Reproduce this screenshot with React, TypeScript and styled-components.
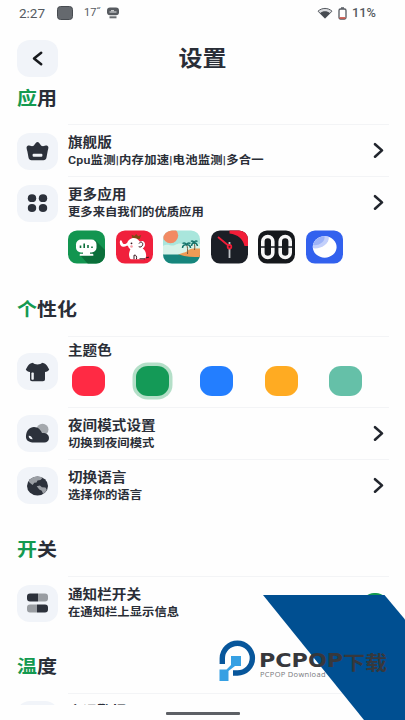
import React from 'react';
import styled, { createGlobalStyle } from 'styled-components';

const Global = createGlobalStyle`
  body { margin: 0; background: #fefefe; overflow: hidden; }
  * { box-sizing: border-box; }
`;

const Screen = styled.div`
  position: relative;
  width: 405px;
  height: 720px;
  overflow: hidden;
  display: flex;
  flex-direction: column;
  background: #fefefe;
  color: #2a2e37;
  font-family: Roboto, 'Noto Sans CJK SC', sans-serif;
`;

const StatusBar = styled.header`
  height: 26px;
  flex: none;
  display: flex;
  align-items: center;
  justify-content: space-between;
  padding: 0 28px 0 19px;
  color: #555a60;
`;

const StatusGroup = styled.div<{ $gap: number }>`
  display: flex;
  align-items: center;
  gap: ${p => p.$gap}px;
`;

const StatusText = styled.span<{ $size: number; $width: number; $weight?: number }>`
  font: ${p => p.$weight ?? 500} ${p => p.$size}px/14px Roboto, sans-serif;
  width: ${p => p.$width}px;
  white-space: nowrap;
`;

const TitleBar = styled.div`
  height: 58px;
  flex: none;
  display: grid;
  grid-template-columns: 41px 1fr 41px;
  align-items: center;
  padding: 7px 17px 0;
`;

const Tile = styled.div`
  width: 41px;
  height: 37px;
  border-radius: 13px / 12px;
  background: #f1f4f9;
  display: flex;
  align-items: center;
  justify-content: center;
`;

const PageTitle = styled.h1`
  margin: 0;
  text-align: center;
  font-size: 24px;
  font-weight: 700;
  line-height: 30px;
  transform: scaleY(0.92);
`;

const Content = styled.main`
  height: 621px;
  flex: none;
  overflow: hidden;
`;

const Section = styled.section<{ $height: number }>`
  height: ${p => p.$height}px;
`;

const Heading = styled.h2<{ $height: number }>`
  margin: 0;
  height: ${p => p.$height}px;
  padding: 1px 0 0 17px;
  font-size: 20px;
  font-weight: 700;
  line-height: 28px;
  span {
    display: inline-block;
    transform: scaleY(0.92);
  }
  em {
    font-style: normal;
    color: #149a50;
  }
`;

const RowBox = styled.div<{ $height: number }>`
  display: grid;
  grid-template-columns: 41px 1fr;
  column-gap: 10px;
  padding: 0 16px 0 17px;
  height: ${p => p.$height}px;
`;

const IconCell = styled.div<{ $top: number }>`
  padding-top: ${p => p.$top}px;
`;

const Body = styled.div`
  border-top: 1px solid #f3f4f6;
`;

const Line = styled.div`
  display: flex;
  justify-content: space-between;
  height: 51px;
  padding: 8px 4px 0 0;
`;

const Title = styled.div`
  font-size: 14.6px;
  font-weight: 700;
  line-height: 19px;
  white-space: nowrap;
  transform: scaleY(0.9);
`;

const Sub = styled.div<{ $spacing?: number }>`
  font-size: 12.35px;
  font-weight: 600;
  line-height: 17px;
  letter-spacing: ${p => p.$spacing ?? 0}px;
  white-space: nowrap;
  transform: scaleY(0.92);
`;

const Chevron = styled.svg`
  margin-top: 9px;
`;

const Apps = styled.div`
  display: flex;
  gap: 10.6px;
  padding-top: 2px;
`;

const Swatches = styled.div`
  display: flex;
  gap: 31.1px;
  padding: 7px 0 0 4.3px;
`;

const Swatch = styled.div<{ $color: string; $selected?: boolean }>`
  width: 33px;
  height: 30px;
  border-radius: 12px / 11px;
  background: ${p => p.$color};
  box-shadow: ${p => (p.$selected ? '0 0 0 3.5px #b4dfc8' : 'none')};
`;

const SwatchBody = styled(Body)`
  padding-top: 0;
`;

const SwatchTitle = styled(Title)`
  margin: 4px 0 -1px;
  padding-top: 0;
`;

const Switch = styled.div`
  width: 26px;
  height: 24px;
  margin: 8px -3px 0 0;
  border-radius: 12px;
  background: #149a50;
`;

const NavBar = styled.footer`
  height: 15px;
  flex: none;
  display: flex;
  justify-content: center;
  padding-top: 7px;
`;

const Handle = styled.div`
  width: 74px;
  height: 2.5px;
  border-radius: 1px;
  background: #5d6065;
`;

const Ribbon = styled.svg`
  position: absolute;
  left: 263px;
  top: 595px;
`;

const Brand = styled.div`
  position: absolute;
  left: 219px;
  top: 640px;
  display: flex;
  gap: 3px;
`;

const BrandText = styled.div`
  padding-top: 11px;
  width: 140px;
`;

const BrandName = styled.div`
  display: flex;
  height: 19px;
  color: #37383c;
  white-space: nowrap;
`;

const Latin = styled.span`
  width: 84px;
  font: 700 19px/19px 'DejaVu Sans', sans-serif;
  transform: scaleX(1.17);
  transform-origin: left;
`;

const Han = styled.span`
  font: 700 22px/20px 'Noto Sans CJK SC', sans-serif;
  transform: scaleY(0.88);
`;

const BrandSub = styled.div`
  font: 400 7.5px/9px 'Open Sans', sans-serif;
  letter-spacing: 0.3px;
  padding-left: 1px;
  color: #77797d;
  white-space: nowrap;
`;

const Arrow = () => (
  <Chevron width="13" height="17" viewBox="0 0 13 17" fill="none">
    <path d="M3 2.200 10 8.400 3 14.700" stroke="#22262e" strokeWidth="2.600" strokeLinecap="round" strokeLinejoin="round" />
  </Chevron>
);

const Crown = () => (
  <svg width="25" height="20" viewBox="0 0 25 20">
    <path d="M2.700 4.700C4 4.200 6.500 5.700 8 5.100 9.600 4.500 10.600 1 12.500 1S15.400 4.500 17 5.100C18.500 5.700 21 4.200 22.300 4.700 24.200 5.500 23.200 8 22.600 10.500L21.500 16.600C21.100 18.600 20.100 19.200 18.400 19.200H6.600C4.900 19.200 3.900 18.600 3.500 16.600L2.400 10.500C1.800 8 .8 5.500 2.700 4.700Z" fill="#2c313b" />
    <rect x="7.600" y="12.800" width="9.800" height="2.900" rx="1" fill="#eff2f6" />
  </svg>
);

const Dots = () => (
  <svg width="23" height="20" viewBox="0 0 23 20" fill="#2c313b">
    <ellipse cx="6" cy="5.200" rx="4.200" ry="3.900" />
    <ellipse cx="17" cy="5.200" rx="4.200" ry="3.900" />
    <ellipse cx="6" cy="15" rx="4.200" ry="3.900" />
    <ellipse cx="17" cy="15" rx="4.200" ry="3.900" />
  </svg>
);

const Shirt = () => (
  <svg width="25" height="20" viewBox="0 0 25 20">
    <path d="M8 .8c1.200 2.300 7.800 2.300 9 0 3 .5 4.300 1.700 5.200 3.200l2 3.600c-.8 1.500-2.300 2.500-4.200 2.500V17c0 1.600-.7 2.200-2.200 2.200H7.200c-1.500 0-2.200-.6-2.200-2.200v-6.900C3.100 10.100 1.600 9.100.8 7.600l2-3.600C3.700 2.500 5 1.300 8 .8Z" fill="#2c313b" />
    <rect x="6.400" y="10.600" width="2.400" height="7.200" rx=".8" fill="#eff2f6" />
  </svg>
);

const Cloud = () => (
  <svg width="25" height="21" viewBox="0 0 25 21">
    <ellipse cx="17.500" cy="6.500" rx="6" ry="5.700" fill="#a4a8ad" />
    <path d="M6 19.300C2.400 18.500.6 16 1 12.800 1.300 7.500 4.500 4 9 4c4.200 0 6.600 2.800 8 6 3.800-.3 7 1.300 7 5 0 2.800-2 4.500-4.700 4.500H8.500c-1 0-1.600 0-2.500-.2Z" fill="#2c313b" />
    <path d="M3.700 12.800c1.600-.3 3.700 1.500 3.900 3.400-2.200.3-4-1.200-3.900-3.400Z" fill="#f1f4f9" />
  </svg>
);

const Globe = () => (
  <svg width="23" height="20" viewBox="0 0 23 20">
    <ellipse cx="11.500" cy="10" rx="10.500" ry="9.500" fill="#2c313b" />
    <path d="M6 2c3-1.600 7.500-2 10.700-.3L14.500 4l-3 .6-1 2-2.200.2L6.600 9 3.400 6.400 2.600 5.200C3.400 3.800 4.600 2.700 6 2ZM10.700 10.200l3.200-.8 2 1.800 3.600.4 1.300 2.200c-.8 1.700-2 3-3.600 4.100l-1.400-3.200-2.500-1.200Z" fill="#9a9ea4" />
  </svg>
);

const Toggles = () => (
  <svg width="23" height="20" viewBox="0 0 23 20">
    <path d="M4 .5h8v8H4A3 3 0 0 1 1 5.500v-2a3 3 0 0 1 3-3ZM11 11.500h8a3 3 0 0 1 3 3v2a3 3 0 0 1-3 3h-8Z" fill="#2c313b" />
    <path d="M12 .5h7a3 3 0 0 1 3 3v2a3 3 0 0 1-3 3h-7ZM4 11.500h7v8H4a3 3 0 0 1-3-3v-2a3 3 0 0 1 3-3Z" fill="#999da2" />
  </svg>
);

interface AppIconProps {
  id: string;
  fill: string;
  children: React.ReactNode;
}

const AppIcon = ({ id, fill, children }: AppIconProps) => (
  <svg width="37" height="34" viewBox="0 0 37 34">
    <clipPath id={id}>
      <rect y=".4" width="37" height="33.200" rx="9" />
    </clipPath>
    <g clipPath={`url(#${id})`}>
      <rect width="37" height="34" fill={fill} />
      {children}
    </g>
  </svg>
);

const AppIcons = () => (
  <Apps>
    <AppIcon id="monitor" fill="#129550">
      <path d="M27 10 37 20v14H20L12 25Z" fill="#0b6f3a" />
      <rect x="8" y="9.500" width="20.500" height="13" rx="5" fill="#fff" />
      <path d="M15 21.500h7v2.200h2.600c.8 0 1.200 2 .5 2H12c-.8 0-.3-2 .5-2H15Z" fill="#fff" />
      <path d="M12.500 15.500v2.500M16.200 13.500v4.500M20 15v3M24 16.500V18" stroke="#0b6f3a" strokeWidth="1.600" />
    </AppIcon>
    <AppIcon id="elephant" fill="#f0203c">
      <path d="m16.500 8.500-1-3.700 3 1.200 1.700-2 2 2.200 3-1.200-1.500 4Z" fill="#7d4a14" />
      <path d="M4 11C3.200 14.500 5 17.300 8 16.800c1.800-.3 3-1.300 4-.8.5 1.500 1.300 2.500 2.400 3.200-1 2.500-2 5-1 7.700.3 1.500 1 2.300 2.300 2.300h11.400c2-.2 3.300-1.700 3-4.500-.2-3-1.500-5-3.500-6.200 2.200-1.200 3-4 1.900-6-1.200-2-3.500-1.800-4.800-1C21.500 8.200 18.500 7.500 16 8.200c-2.500.7-4 2.300-4.800 4.600-1.200 1.200-3.200 1.800-4.200.7C6.300 12.700 6 10.800 5 10.300c-.5-.1-.9.200-1 .7Z" fill="#fff" />
      <path d="M23 13.500c1.500-2.500 4-1.300 3.700 1-.3 2-2.200 3.200-4 2.200M18 29.200v-4c2-.5 3 1 2.500 4M23.500 28.800h5.500M30 27.800l3-.6" fill="none" stroke="#3a1820" strokeWidth="1" />
      <circle cx="15.500" cy="13.300" r=".9" fill="#3a1820" />
      <circle cx="15.500" cy="16.500" r="1.300" fill="#f79ca5" />
    </AppIcon>
    <AppIcon id="beach" fill="#a9e6dc">
      <path d="M0 16c5-3 8 1 12-1s6-2 9 0 9-4 16-1v12H0Z" fill="#d6f3e9" />
      <circle cx="7.500" cy="5.500" r="7.700" fill="#f28a63" />
      <path d="M14 25.500c5-3.500 8-2 11-5 2-2.500 8-2 12-2v8Z" fill="#ee9b55" />
      <path d="M0 24.500h37V34H0Z" fill="#16857c" />
      <path d="M16 24.500c6-2 13 .5 21-1V27c-7 0-14 0-21-2.500Z" fill="#ee9b55" />
      <path d="M24.500 24c.3-4 .2-7-1-9.500M31.500 20c.5-3 .3-5-.5-7.500" fill="none" stroke="#76583a" strokeWidth="1" />
      <path d="M19.500 18c0-2.600 1.500-3.300 4-3.500M27.500 18c0-2.500-1.500-3.300-4-3.500M19.500 13.500c1.500-1 3-.5 4 1 1-1.500 2.300-2 4-1M28.500 16c.2-2 .8-3 2.500-3.500M34.500 16c-.3-2-1.500-3-3.500-3.500M28 11.500c1.200-.8 2.400-.3 3 1 .6-1.400 2-2 3.500-1" fill="none" stroke="#15736a" strokeWidth="1.500" />
    </AppIcon>
    <AppIcon id="clock" fill="#1b1f26">
      <path d="M18.500 0H37v16h-3.500C32 9 27 4.500 18.500 3.500Z" fill="#f21d38" />
      <path d="M18.500 12v16" stroke="#bfc2c5" strokeWidth="1.800" />
      <path d="m7 7 11.500 9.500" stroke="#f21d38" strokeWidth="1.800" />
      <circle cx="18.500" cy="16.800" r="2.700" fill="#f21d38" />
      <circle cx="18.500" cy="16.800" r="1" fill="#4f1620" />
    </AppIcon>
    <AppIcon id="counter" fill="#15181c">
      <rect x="4.800" y="6.500" width="10" height="21" rx="5" fill="none" stroke="#f7f7f7" strokeWidth="3.600" />
      <rect x="22.200" y="6.500" width="10" height="21" rx="5" fill="none" stroke="#f7f7f7" strokeWidth="3.600" />
      <path d="M0 17h37" stroke="#15181c" strokeWidth="1.300" />
    </AppIcon>
    <AppIcon id="moon" fill="#3261ee">
      <ellipse cx="18.700" cy="17" rx="11.900" ry="10.700" fill="#fff" />
      <path d="M6.800 17c0-6 5.300-10.700 12-10.700 2.500 0 4 .5 4 .5 1 7-8 12.500-15.800 11.500Z" fill="#c3d0fb" />
      <path d="M7 15C8 10 13 6.300 18.500 6.300c1 5.500-5.500 9.700-11.500 8.700Z" fill="#9db3f8" />
    </AppIcon>
  </Apps>
);

interface RowProps {
  icon: React.ReactNode;
  title: string;
  sub?: string;
  subSpacing?: number;
  height?: number;
  end?: React.ReactNode;
  children?: React.ReactNode;
}

const Row = ({ icon, title, sub, subSpacing, height = 52, end, children }: RowProps) => (
  <RowBox $height={height}>
    <IconCell $top={8.500}>
      <Tile>{icon}</Tile>
    </IconCell>
    <Body>
      <Line>
        <div>
          <Title>{title}</Title>
          {sub && <Sub $spacing={subSpacing}>{sub}</Sub>}
        </div>
        {end}
      </Line>
      {children}
    </Body>
  </RowBox>
);

const themeColors = ['#ff2a44', '#149a57', '#237eff', '#ffab22', '#65c0a8'];

export default function App() {
  return (
    <>
      <Global />
      <Screen>
        <StatusBar>
          <StatusGroup $gap={11}>
            <StatusText $size={13.500} $width={27} $weight={400}>2:27</StatusText>
            <svg width="16" height="14" viewBox="0 0 16 14">
              <rect x=".5" y=".5" width="15" height="13" rx="3" fill="#65696e" stroke="#484c51" />
            </svg>
            <StatusText $size={11} $width={11} $weight={400}>17˝</StatusText>
            <svg width="14" height="12" viewBox="0 0 14 12">
              <rect x="1" y=".5" width="12" height="7.800" rx="3" fill="#575b60" />
              <path d="M3.500 9.300h7v2h-7Z" fill="#686c70" />
              <path d="M3.500 5h7M5 3.700h3" stroke="#e4e5e6" strokeWidth="1" />
            </svg>
          </StatusGroup>
          <StatusGroup $gap={5}>
            <svg width="16" height="12" viewBox="0 0 16 12">
              <path d="M1 4.200C5 .5 11 .5 15 4.200L8 11.200Z" fill="#d9dadd" stroke="#555a60" strokeWidth="1" />
              <path d="M3 6.200c3-2.600 7-2.600 10 0l-5 5Z" fill="#474b51" />
            </svg>
            <svg width="9" height="13" viewBox="0 0 9 13">
              <rect x="1" y="2" width="7" height="10" rx="1.500" fill="none" stroke="#555a60" strokeWidth="1.300" />
              <path d="M3 1h3" stroke="#555a60" strokeWidth="1.500" />
              <path d="M1.500 11h6" stroke="#c95a4f" strokeWidth="1.800" />
            </svg>
            <StatusText $size={12.800} $width={25}>11%</StatusText>
          </StatusGroup>
        </StatusBar>

        <TitleBar>
          <Tile>
            <svg width="14" height="17" viewBox="0 0 14 17" fill="none">
              <path d="M10.200 2.700 3 8.500 10.200 14.300" stroke="#17191d" strokeWidth="2.500" strokeLinecap="round" strokeLinejoin="round" />
            </svg>
          </Tile>
          <PageTitle>设置</PageTitle>
        </TitleBar>

        <Content>
          <Section $height={211}>
            <Heading $height={40}><span><em>应</em>用</span></Heading>
            <Row icon={<Crown />} title="旗舰版" sub="Cpu监测|内存加速|电池监测|多合一" subSpacing={0.220} end={<Arrow />} />
            <Row icon={<Dots />} title="更多应用" sub="更多来自我们的优质应用" height={110} end={<Arrow />}>
              <AppIcons />
            </Row>
          </Section>

          <Section $height={240}>
            <Heading $height={41}><span><em>个</em>性化</span></Heading>
            <RowBox $height={70.500}>
              <IconCell $top={17}>
                <Tile><Shirt /></Tile>
              </IconCell>
              <SwatchBody>
                <SwatchTitle>主题色</SwatchTitle>
                <Swatches>
                  {themeColors.map((color, i) => (
                    <Swatch key={color} $color={color} $selected={i === 1} />
                  ))}
                </Swatches>
              </SwatchBody>
            </RowBox>
            <Row icon={<Cloud />} title="夜间模式设置" sub="切换到夜间模式" end={<Arrow />} />
            <Row icon={<Globe />} title="切换语言" sub="选择你的语言" end={<Arrow />} />
          </Section>

          <Section $height={116.500}>
            <Heading $height={41}><span><em>开</em>关</span></Heading>
            <Row icon={<Toggles />} title="通知栏开关" sub="在通知栏上显示信息" end={<Switch />} />
          </Section>

          <Section $height={60}>
            <Heading $height={41}><span><em>温</em>度</span></Heading>
            <Row icon={null} title="高温警报" />
          </Section>
        </Content>

        <NavBar>
          <Handle />
        </NavBar>

        <Ribbon width="142" height="125" viewBox="0 0 142 125">
          <path d="M0 0h121.500L142 24.500V125h-41Z" fill="#004f91" />
        </Ribbon>
        <Brand>
          <svg width="37" height="42" viewBox="0 0 37 42">
            <path d="M3.300 24V18.300A15.200 15.200 0 0 1 18.500 3.200A14.900 14.900 0 0 1 18.500 33H14" fill="none" stroke="#07569b" strokeWidth="5.400" />
            <path d="M12 16h10v10h-6l-6.500 5v10H.5V29.500h7L12 25Z" fill="#36a0e3" />
          </svg>
          <BrandText>
            <BrandName>
              <Latin>PCPOP</Latin>
              <Han>下载</Han>
            </BrandName>
            <BrandSub>PCPOP Download</BrandSub>
          </BrandText>
        </Brand>
      </Screen>
    </>
  );
}
